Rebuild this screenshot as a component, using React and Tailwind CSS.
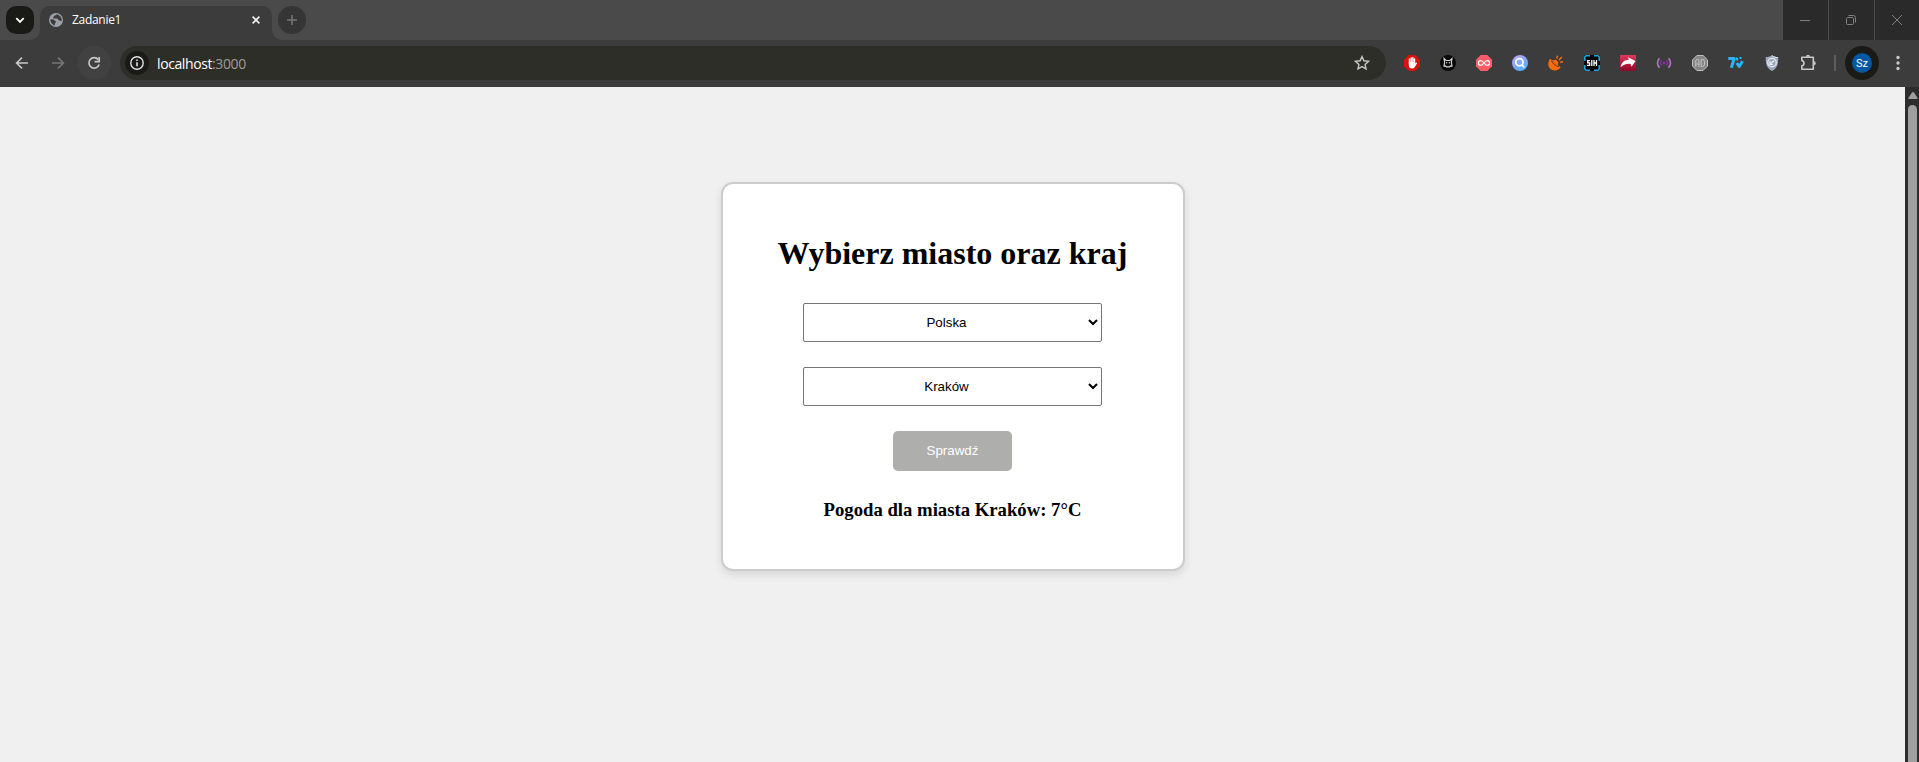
import React from "react";

function Ext({ children, label }) {
  return (
    <button aria-label={label} className="flex h-9 w-9 items-center justify-center">
      <svg width="16" height="16" viewBox="0 0 16 16" fill="none">{children}</svg>
    </button>
  );
}

function TabStrip() {
  return (
    <div className="flex h-10 bg-[#4a4a4a]">
      <button aria-label="Search tabs" className="mt-1.5 ml-1.5 flex h-7 w-7 items-center justify-center rounded-[10px] bg-[#1a1b16]">
        <svg width="28" height="28" fill="none" stroke="#fff" strokeWidth="1.8"><path d="M10.3 12.2l3.7 3.7 3.7-3.7" /></svg>
      </button>
      <svg width="10" height="10" className="-ml-1 self-end"><path d="M10 0v10H0A10 10 0 0 0 10 0" fill="#3c3c3c" /></svg>
      <div className="mt-1.5 flex h-[34px] w-[232px] items-center rounded-t-[10px] bg-[#3c3c3c] pb-[6px] pl-[9px]">
        <svg width="14" height="14" viewBox="0 0 14 14">
          <circle cx="7" cy="7" r="7" fill="#9aa0a6" />
          <path d="M7.4 1.3c-.2 1-1 1.2-2 1.4-.8.3-.4 1.2-1 1.7-.5.3-.3 1.2.5 1.2h3.200c1.200 0 .8 1.800 2.300 1.800 1.100 0 1.200.6 2.200.5A5.700 5.700 0 0 0 7.400 1.300zM1.400 6.200c1.700.1 3.700-.1 4.300 1.200.4.9 1.500.7 1.400 1.700-.1.9-1.200.7-1.300 1.700-.1.7-.1 1.200.3 1.800A5.700 5.700 0 0 1 1.400 6.200z" fill="#3c3c3c" />
        </svg>
        <span className="ml-[9px] flex-1 font-['Open_Sans',sans-serif] text-[12px] tracking-[-0.3px] text-white">Zadanie1</span>
        <svg width="8" height="8" className="mr-3" stroke="#f1f1f1" strokeWidth="1.6"><path d="M.6.6l6.8 6.8M7.4.6L.6 7.4" /></svg>
      </div>
      <svg width="10" height="10" className="-mr-1 self-end"><path d="M0 0v10h10A10 10 0 0 1 0 0" fill="#3c3c3c" /></svg>
      <button aria-label="New tab" className="mt-1.5 flex h-7 w-7 items-center justify-center rounded-full bg-[#353535]">
        <svg width="28" height="28" stroke="#777" strokeWidth="1.5"><path d="M9 14h10M14 9v10" /></svg>
      </button>
      <div className="ml-auto flex gap-px">
        <button aria-label="Minimize" className="flex w-[45px] items-center justify-center bg-[#2a2a2a]">
          <svg width="45" height="40" stroke="#808080"><path d="M17 20.5h10" /></svg>
        </button>
        <button aria-label="Restore" className="flex w-[45px] items-center justify-center bg-[#2a2a2a]">
          <svg width="45" height="40" fill="none" stroke="#808080"><rect x="17.5" y="17.5" width="7" height="7" rx="1" /><path d="M19.5 15.5h5q2 0 2 2v5" /></svg>
        </button>
        <button aria-label="Close" className="flex w-[44px] items-center justify-center bg-[#2a2a2a]">
          <svg width="44" height="40" stroke="#808080"><path d="M17 15l10 10M27 15L17 25" /></svg>
        </button>
      </div>
    </div>
  );
}

function Toolbar() {
  return (
    <div className="flex h-[47px] items-center bg-[#3c3c3c] pb-px pl-[5px]">
      <button aria-label="Back" className="flex h-[34px] w-[34px] items-center justify-center">
        <svg width="34" height="34" fill="none" stroke="#c7c7c7" strokeWidth="1.6"><path d="M23 17H12M17 11.6L11.6 17l5.4 5.4" /></svg>
      </button>
      <button aria-label="Forward" className="ml-0.5 flex h-[34px] w-[34px] items-center justify-center">
        <svg width="34" height="34" fill="none" stroke="#777" strokeWidth="1.6"><path d="M11 17h11M17 11.6l5.4 5.4-5.4 5.4" /></svg>
      </button>
      <button aria-label="Reload" className="ml-0.5 flex h-[34px] w-[34px] items-center justify-center rounded-full bg-[#414141]">
        <svg width="34" height="34" fill="none" stroke="#c7c7c7" strokeWidth="1.7"><path d="M21.2 13.6A5.2 5.2 0 1 0 22.1 18.4" /><path d="M22.2 11v4.6h-4.6" /></svg>
      </button>
      <div className="ml-[9px] flex h-[34px] w-[1266px] items-center rounded-full bg-[#2d2e28] pl-[5px]">
        <span className="flex h-6 w-6 items-center justify-center rounded-full bg-[#1a1b16]">
          <svg width="24" height="24" fill="none" stroke="#e3e3e3" strokeWidth="1.4"><circle cx="12" cy="12" r="6.2" /><path d="M12 11.2v4M12 8.4v1.5" strokeWidth="1.6" /></svg>
        </span>
        <span className="ml-2 flex-1 font-['Open_Sans',sans-serif] text-[14px] tracking-[-0.4px] text-white">localhost<span className="text-[#9b9b98]">:3000</span></span>
        <svg width="16" height="16" className="mr-4" fill="none" stroke="#c7c7c7" strokeWidth="1.4"><path d="M8 1.6l1.9 4.2 4.6.5-3.4 3.1.9 4.5-4-2.3-4 2.3.9-4.5L1.500 6.300l4.600-.5z" /></svg>
      </div>
      <div className="ml-2 flex items-center">
        <Ext label="AdBlock">
          <path d="M4.700 0h6.600L16 4.700v6.600L11.300 16H4.700L0 11.300V4.700z" fill="#d9120c" />
          <path d="M5.500 4v4M7.200 3v4M8.900 2.800v4M10.500 4v5" stroke="#fff" strokeWidth="1.400" strokeLinecap="round" />
          <path d="M4.800 7h6.400v1.500l1.400-1q.8 0 .3.900L10.800 12q-.8 1.500-2.700 1.500-3.300 0-3.300-3.500z" fill="#fff" />
        </Ext>
        <Ext label="Cat">
          <circle cx="8" cy="8" r="8" fill="#080808" />
          <path d="M4 3.500l2 2h4l2-2-.6 3.700.6 4-1.700-.3-.8 1h-3l-.8-1-1.700.3.600-4z" stroke="#d5d5d5" strokeWidth="1.100" />
          <path d="M6 7.800h1.300M8.800 7.800h1.300" stroke="#fff" />
        </Ext>
        <Ext label="Infinity">
          <path d="M4.700 0h6.600L16 4.700v6.600L11.300 16H4.700L0 11.300V4.700z" fill="#ff5c68" />
          <path d="M8 8C6.500 6 5.500 5.700 4.700 5.700a2.300 2.300 0 0 0 0 4.600C5.500 10.300 6.500 10 8 8s2.500-2.300 3.300-2.300a2.300 2.300 0 0 1 0 4.600C10.500 10.300 9.500 10 8 8z" stroke="#fff" strokeWidth="1.200" />
        </Ext>
        <Ext label="Search">
          <defs><linearGradient id="searchFill" x1="0" y1="0" x2=".6" y2="1"><stop stopColor="#c3a0f5" /><stop offset="1" stopColor="#50b0ff" /></linearGradient></defs>
          <circle cx="8" cy="8" r="8" fill="url(#searchFill)" />
          <circle cx="7.400" cy="7.200" r="3.600" stroke="#fff" strokeWidth="1.700" /><path d="M10 10l2.400 2.400" stroke="#fff" strokeWidth="1.700" />
        </Ext>
        <Ext label="Satellite">
          <path d="M2.300 3.800L12.700 12.300c-2 3.500-7.300 4.100-10.400 1.500C-.5 11.300-.3 6.500 2.300 3.800z" fill="#ff6a0a" />
          <path d="M3.500 5.600c.8 2.500 4 5.400 7.500 6.200" stroke="#3c3c3c" strokeWidth="1" />
          <path d="M4.500 5.200l3.500-.4 2.200 2.400-.4 3.400z" fill="#ff6a0a" />
          <path d="M8.800 3.500L9.500.6M11 5l2.800-3M12.200 7.300l2.800-.6" stroke="#ff6a0a" strokeWidth="1.500" />
        </Ext>
        <Ext label="SIH">
          <rect width="16" height="16" rx="2" fill="#050505" />
          <path d="M.8 6V2L2 .8h4M10 .8h4L15.200 2v4M15.200 10v4L14 15.200h-4M6 15.200H2L.8 14v-4" stroke="#18a5d5" strokeWidth="1.600" />
          <path d="M6 5.700H3.700v2.200H5.600v2.500H3M7.800 5v6M10 5v6M12.500 5v6M10 8h2.500" stroke="#fff" strokeWidth="1.300" />
        </Ext>
        <Ext label="Share">
          <defs><linearGradient id="shareFill" x1="0" y1="0" x2="0" y2="1"><stop stopColor="#d83c5c" /><stop offset=".5" stopColor="#c5163d" /><stop offset="1" stopColor="#8b0b2b" /></linearGradient></defs>
          <path d="M0 0h16v16H0z" fill="url(#shareFill)" />
          <path d="M.5 12.300C1.500 7.500 4.500 4.800 8.800 4.800L8 2.200 15.500 6 11.500 11.800 10.500 9C7 8.300 3.500 9.500.5 12.300z" fill="#fff" />
        </Ext>
        <Ext label="Broadcast">
          <path d="M3.500 3.300q-4 4.700 0 9.400M12.500 3.300q4 4.700 0 9.400" stroke="#b77ac8" strokeWidth="1.500" />
          <path d="M5.600 5.400q-2.400 2.600 0 5.200M10.400 5.400q2.400 2.600 0 5.200" stroke="#8d2da6" strokeWidth="1.300" />
          <circle cx="8" cy="8" r="1.400" fill="#8d2da6" />
        </Ext>
        <Ext label="Ad blocker">
          <path d="M4.900.5h6.200l4.400 4.400v6.200l-4.400 4.400H4.900L.5 11.100V4.900z" fill="#858585" stroke="#c0c0c0" />
          <path d="M3.800 12V6q0-1.800 1.600-1.800T7 6v6M3.800 9H7M9.200 4.400v7.200h1q2.300 0 2.300-2.300V6.700q0-2.300-2.300-2.300z" stroke="#c4c4c4" />
        </Ext>
        <Ext label="7TV">
          <path d="M.3 3.600h5.900L3.300 12.700" stroke="#29b6f6" strokeWidth="3" strokeLinejoin="round" />
          <path d="M8.700 8l2.500 3.500 3.300-5.300" stroke="#29b6f6" strokeWidth="3" strokeLinejoin="round" />
          <path d="M8 2.200l2.500 1-.8 2.600-2-.5zM11.500 2h2v2h-2z" fill="#29b6f6" />
        </Ext>
        <Ext label="Shield">
          <path d="M8 0c1.500 1.500 4 2 6.300 2 .2 6.500-1 11.500-6.300 14C2.700 13.500 1.500 8.500 1.700 2 4 2 6.500 1.500 8 0z" fill="#9aa5b8" />
          <path d="M8 .7c1.500 1.200 3.500 1.800 5.500 1.900" stroke="#dfe5ed" />
          <circle cx="8" cy="7.500" r="4.300" stroke="#dce2ec" strokeWidth="1.500" /><path d="M6 9.500l4-4M6 6v3.500h3" stroke="#e7ebf2" strokeWidth="1.200" />
        </Ext>
        <Ext label="Extensions">
          <path d="M1.800 2.300H13.300V14.300H1.800V11q2.200-.6 2.200-2.700T1.800 5.600z" stroke="#c7c7c7" strokeWidth="1.600" strokeLinejoin="round" />
          <path d="M6 1.800a2 2 0 0 1 4 0zM13.800 6.300a2 2 0 0 1 0 4z" fill="#c7c7c7" />
        </Ext>
      </div>
      <div className="ml-2 h-4 w-0.5 bg-[#5c5c5c]" />
      <button className="ml-[9px] flex h-[34px] w-[34px] items-center justify-center rounded-full bg-[#1a1b16]">
        <span className="flex h-5 w-5 items-center justify-center rounded-full bg-[#0058a3] font-['Roboto',sans-serif] text-[11px] leading-none text-white">Sz</span>
      </button>
      <svg width="4" height="16" className="ml-[17px]" fill="#c7c7c7"><circle cx="2" cy="2.500" r="1.700" /><circle cx="2" cy="8" r="1.700" /><circle cx="2" cy="13.500" r="1.700" /></svg>
    </div>
  );
}

function SelectField({ label, value }) {
  return (
    <select aria-label={label} defaultValue={value} className="h-[39px] w-[299px] rounded-[2px] border border-[#767676] bg-white p-[10px] text-center font-['Liberation_Sans',sans-serif] text-[13.333px] leading-normal text-black">
      <option>{value}</option>
    </select>
  );
}

export default function App() {
  return (
    <div className="flex h-[762px] flex-col overflow-hidden bg-[#f0f0f0]">
      <TabStrip />
      <Toolbar />
      <div className="flex min-h-0 flex-1">
        <main className="flex flex-1 items-start justify-center pt-[95px]">
          <section className="ml-px flex h-[389px] w-[464px] flex-col items-center rounded-xl border-2 border-[#ccc] bg-white pt-[51px] pr-px font-['Liberation_Serif',serif] text-black shadow-[0_4px_8px_rgba(0,0,0,0.1)]">
            <h1 className="text-[32px] leading-[37px] font-bold whitespace-nowrap">Wybierz miasto oraz kraj</h1>
            <div className="mt-[31px] flex flex-col gap-[25px]">
              <SelectField label="Kraj" value="Polska" />
              <SelectField label="Miasto" value="Kraków" />
            </div>
            <button className="mt-[25px] h-10 w-[119px] rounded-[5px] bg-[#aeaeac] font-['Liberation_Sans',sans-serif] text-[13.333px] text-white">Sprawdź</button>
            <h3 className="mt-[28px] text-[18.72px] leading-[22px] font-bold whitespace-nowrap">Pogoda dla miasta Kraków: 7°C</h3>
          </section>
        </main>
        <div className="flex w-3.5 flex-col items-center bg-[#2c2c2c] pt-[5px] pl-px">
          <svg width="10" height="7" fill="#9f9f9f"><path d="M3.800.8Q5-.6 6.200.8L9.600 6q.2 1-.7 1H1.100Q.2 7 .4 6z" /></svg>
          <div className="mt-1.5 w-[9px] flex-1 rounded-t-full bg-[#9f9f9f]" />
        </div>
      </div>
    </div>
  );
}
